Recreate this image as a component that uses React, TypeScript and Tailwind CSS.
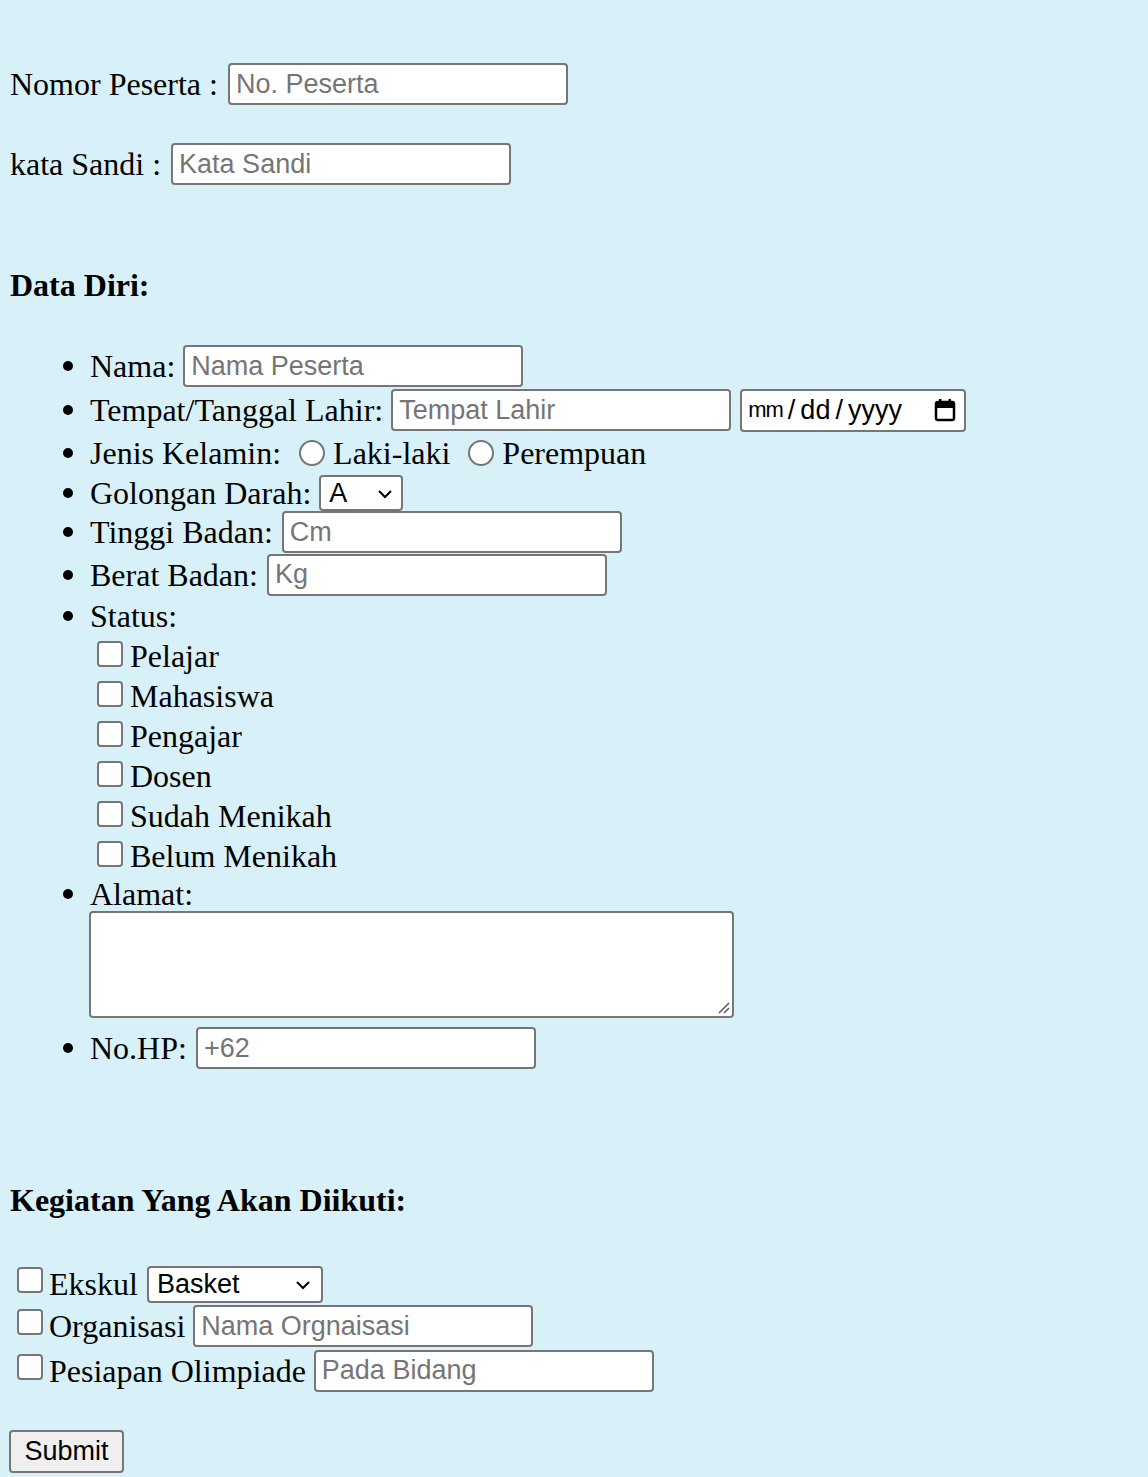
import React from 'react';

const inputCls =
  "h-[42px] w-[340px] rounded-[4px] border-2 border-[#767676] bg-white px-[6px] font-['Liberation_Sans',Arial,sans-serif] text-[27px] text-black placeholder:text-[#757575] outline-none";

const boxCls =
  "h-[26px] w-[26px] shrink-0 appearance-none rounded-[4px] border-2 border-[#767676] bg-white";

const radioCls =
  "h-[26px] w-[26px] shrink-0 appearance-none rounded-full border-2 border-[#767676] bg-white";

const Chevron: React.FC<{ className?: string }> = ({ className }) => (
  <svg className={className} width="16" height="10" viewBox="0 0 16 10" fill="none">
    <path d="M2 2l6 6 6-6" stroke="#000" strokeWidth="2" />
  </svg>
);

const Bullet: React.FC = () => (
  <span className="mr-[17px] h-[10px] w-[10px] shrink-0 rounded-full bg-black" />
);

const statusList = ['Pelajar', 'Mahasiswa', 'Pengajar', 'Dosen', 'Sudah Menikah', 'Belum Menikah'];

export default function App() {
  return (
    <div className="min-h-screen bg-[#d8f1f9] pl-[10px] pt-[63px] font-['Liberation_Serif','Times_New_Roman',serif] text-[32px] leading-none text-black">
      <form onSubmit={(e) => e.preventDefault()}>
        <div className="flex h-[42px] items-center">
          <label>Nomor Peserta :</label>
          <input className={`${inputCls} ml-[10px]`} placeholder="No. Peserta" />
        </div>
        <div className="mt-[38px] flex h-[42px] items-center">
          <label>kata Sandi :</label>
          <input type="password" className={`${inputCls} ml-[10px]`} placeholder="Kata Sandi" />
        </div>

        <div className="mt-[80px] flex h-[40px] items-center font-bold">Data Diri:</div>

        <ul className="mt-[39px] pl-[53px]">
          <li className="flex h-[44px] items-center">
            <Bullet />
            <span>Nama:</span>
            <input className={`${inputCls} ml-[8px]`} placeholder="Nama Peserta" />
          </li>
          <li className="flex h-[44px] items-center">
            <Bullet />
            <span>Tempat/Tanggal Lahir:</span>
            <input className={`${inputCls} ml-[8px]`} placeholder="Tempat Lahir" />
            <div className="ml-[9px] flex h-[43px] w-[226px] items-center rounded-[4px] border-2 border-[#767676] bg-white pl-[6px] pr-[8px] font-['Liberation_Sans',Arial,sans-serif] text-[27px]">
              <span className="text-[22px] tracking-[-1px]">mm</span>
              <span className="mx-[5px]">/</span>
              <span>dd</span>
              <span className="mx-[5px]">/</span>
              <span>yyyy</span>
              <svg className="ml-auto" width="22" height="24" viewBox="0 0 22 24" fill="none">
                <rect x="2" y="4" width="18" height="18" rx="2" stroke="#000" strokeWidth="2.5" />
                <rect x="2" y="4" width="18" height="6" fill="#000" />
                <rect x="5" y="1" width="2.5" height="5" fill="#000" />
                <rect x="14.5" y="1" width="2.5" height="5" fill="#000" />
              </svg>
            </div>
          </li>
          <li className="flex h-[42px] items-center">
            <Bullet />
            <span>Jenis Kelamin:</span>
            <input type="radio" name="jk" className={`${radioCls} ml-[18px]`} />
            <span className="ml-[8px]">Laki-laki</span>
            <input type="radio" name="jk" className={`${radioCls} ml-[18px]`} />
            <span className="ml-[8px]">Perempuan</span>
          </li>
          <li className="flex h-[37px] items-center">
            <Bullet />
            <span>Golongan Darah:</span>
            <div className="relative ml-[8px] h-[36px] w-[84px]">
              <select className="h-full w-full appearance-none rounded-[4px] border-2 border-[#767676] bg-white pl-[8px] font-['Liberation_Sans',Arial,sans-serif] text-[27px] text-black outline-none">
                <option>A</option>
                <option>B</option>
                <option>AB</option>
                <option>O</option>
              </select>
              <Chevron className="pointer-events-none absolute right-[10px] top-[14px]" />
            </div>
          </li>
          <li className="flex h-[42px] items-center">
            <Bullet />
            <span>Tinggi Badan:</span>
            <input className={`${inputCls} ml-[9px]`} placeholder="Cm" />
          </li>
          <li className="flex h-[43px] items-center">
            <Bullet />
            <span>Berat Badan:</span>
            <input className={`${inputCls} ml-[9px]`} placeholder="Kg" />
          </li>
          <li>
            <div className="flex h-[40px] items-center">
              <Bullet />
              <span>Status:</span>
            </div>
            {statusList.map((s) => (
              <div key={s} className="flex h-[40px] items-center pl-[34px]">
                <input type="checkbox" className={`${boxCls} -mt-[4px]`} />
                <span className="ml-[7px]">{s}</span>
              </div>
            ))}
          </li>
          <li>
            <div className="flex h-[35px] items-center">
              <Bullet />
              <span>Alamat:</span>
            </div>
            <div className="relative ml-[26px] h-[107px] w-[645px]">
              <textarea className="block h-full w-full resize-none rounded-[4px] border-2 border-[#767676] bg-white p-[4px] font-['Liberation_Mono',monospace] text-[27px] outline-none" />
              <svg className="pointer-events-none absolute bottom-[4px] right-[4px]" width="14" height="14" viewBox="0 0 14 14">
                <path d="M13 3L3 13M13 8L8 13" stroke="#555" strokeWidth="1.5" />
              </svg>
            </div>
          </li>
          <li className="mt-[8px] flex h-[44px] items-center">
            <Bullet />
            <span>No.HP:</span>
            <input className={`${inputCls} ml-[9px]`} placeholder="+62" />
          </li>
        </ul>

        <div className="mt-[110px] flex h-[40px] items-center font-bold">Kegiatan Yang Akan Diikuti:</div>

        <div className="mt-[44px] flex h-[40px] items-center">
          <input type="checkbox" className={`${boxCls} ml-[7px] -mt-[8px]`} />
          <span className="ml-[6px]">Ekskul</span>
          <div className="relative ml-[9px] h-[37px] w-[176px]">
            <select className="h-full w-full appearance-none rounded-[4px] border-2 border-[#767676] bg-white pl-[8px] font-['Liberation_Sans',Arial,sans-serif] text-[27px] text-black outline-none">
              <option>Basket</option>
              <option>Futsal</option>
              <option>Voli</option>
            </select>
            <Chevron className="pointer-events-none absolute right-[12px] top-[14px]" />
          </div>
        </div>
        <div className="flex h-[44px] items-center">
          <input type="checkbox" className={`${boxCls} ml-[7px] -mt-[8px]`} />
          <span className="ml-[6px]">Organisasi</span>
          <input className={`${inputCls} ml-[8px]`} placeholder="Nama Orgnaisasi" />
        </div>
        <div className="flex h-[45px] items-center">
          <input type="checkbox" className={`${boxCls} ml-[7px] -mt-[8px]`} />
          <span className="ml-[6px]">Pesiapan Olimpiade</span>
          <input className={`${inputCls} ml-[8px]`} placeholder="Pada Bidang" />
        </div>

        <button
          type="submit"
          className="-ml-[1px] mt-[37px] h-[43px] w-[115px] rounded-[4px] border-2 border-[#767676] bg-[#efefef] font-['Liberation_Sans',Arial,sans-serif] text-[27px] text-black"
        >
          Submit
        </button>
      </form>
    </div>
  );
}
